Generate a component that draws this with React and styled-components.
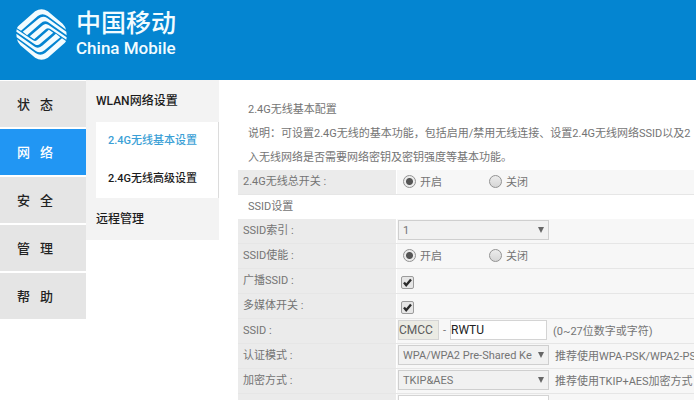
import React, { useState } from 'react';
import styled, { createGlobalStyle } from 'styled-components';

const GlobalStyle = createGlobalStyle`
  * {
    box-sizing: border-box;
  }

  body {
    margin: 0;
    background: #fff;
    color: #747474;
    font-family: Roboto, "Noto Sans CJK SC", sans-serif;
    font-size: 11px;
  }
`;

const Page = styled.div`
  height: 100vh;
  overflow: hidden;
`;

const Header = styled.header`
  display: flex;
  align-items: flex-start;
  gap: 9px;
  height: 80px;
  padding: 9px 16px;
  background: #0485d1;
  color: #f2fcff;
`;

const Logo = styled.svg`
  width: 51px;
  height: 51px;
  flex: none;
`;

const Brand = styled.div`
  display: flex;
  flex-direction: column;
`;

const BrandName = styled.span`
  font-size: 25px;
  font-weight: 500;
  line-height: 30px;
`;

const BrandLatin = styled.span`
  font-size: 17px;
  font-weight: 500;
  line-height: 18px;
`;

const Body = styled.div`
  display: flex;
  align-items: flex-start;
`;

const Nav = styled.nav`
  display: flex;
  flex-direction: column;
  flex: none;
  gap: 2px;
  width: 86px;
  padding-top: 1px;
`;

const NavLink = styled.a`
  display: flex;
  align-items: center;
  gap: 10px;
  height: 46px;
  padding: 0 0 2px 17px;
  background: ${({ $active }) => ($active ? '#2196f3' : '#e5e5e5')};
  color: ${({ $active }) => ($active ? '#fff' : '#222')};
  font-size: 13px;
  font-weight: 500;
  text-decoration: none;
`;

const SubNav = styled.nav`
  flex: none;
  width: 133px;
  background: #f3f3f3;
`;

const SubLink = styled.a`
  display: block;
  padding-left: 10px;
  color: #1c1c1c;
  font-size: 12px;
  font-weight: 500;
  line-height: 42px;
  text-decoration: none;
`;

const SubList = styled.div`
  margin: 0 1px 0 10px;
  background: #fff;
  box-shadow: 1px 0 0 #dcdcdc;
`;

const SubItem = styled.a`
  display: block;
  padding-left: 12px;
  color: ${({ $active }) => ($active ? '#3b9fd6' : '#1c1c1c')};
  font-size: 11px;
  font-weight: 500;
  line-height: 38px;
  text-decoration: none;
`;

const Content = styled.main`
  flex: 1;
  min-width: 0;
  margin: 0 2px 0 19px;
  padding-top: 18px;
  overflow: hidden;
  white-space: nowrap;
`;

const Intro = styled.div`
  padding-left: 10px;
  line-height: 24px;
`;

const IntroText = styled.p`
  margin: 0;
`;

const SectionTitle = styled.div`
  padding-left: 10px;
  line-height: 24px;
`;

const Row = styled.div`
  display: flex;
  height: 25px;
  border-bottom: 1px solid #e6e6e6;
`;

const RowLabel = styled.label`
  flex: none;
  width: 158px;
  padding-left: 5px;
  background: #ebebeb;
  line-height: 24px;
`;

const RowValue = styled.div`
  display: flex;
  flex: 1;
  align-items: center;
  min-width: 0;
  margin-left: 1px;
  padding: 0 0 2px 1px;
  background: #f7f7f7;
`;

const RadioLabel = styled.label`
  display: flex;
  align-items: center;
  gap: 4px;
  width: 86px;
  padding-left: 5px;
`;

const RadioInput = styled.input`
  appearance: none;
  width: 13px;
  height: 13px;
  margin: 0;
  border: 1px solid #929292;
  border-radius: 50%;
  background: ${({ checked }) =>
    checked ? 'radial-gradient(circle, #555 0 3px, #ececec 4px)' : 'linear-gradient(#ececec, #d6d6d6)'};
`;

const CheckInput = styled.input`
  appearance: none;
  width: 13px;
  height: 13px;
  margin: 0;
  border: 1px solid #9b9b9b;
  border-radius: 2px;
  background: #e6e6e6;
`;

const CheckBox = styled.span`
  display: grid;
  margin: 4px 0 0 3px;

  > * {
    grid-area: 1 / 1;
  }

  svg {
    width: 13px;
    height: 13px;
    pointer-events: none;
  }
`;

const SelectBox = styled.span`
  display: grid;
  flex: none;
  align-items: center;
  width: 151px;

  > * {
    grid-area: 1 / 1;
  }

  svg {
    justify-self: end;
    width: 6px;
    height: 6px;
    margin-right: 5px;
    pointer-events: none;
  }
`;

const SelectInput = styled.select`
  appearance: none;
  width: 100%;
  height: 20px;
  padding: 0 12px 0 4px;
  border: 1px solid #cfcfcf;
  border-radius: 0;
  background: #f1f1f1;
  color: #747474;
  font: inherit;
`;

const TextInput = styled.input`
  flex: none;
  width: ${({ $width }) => $width};
  height: 20px;
  padding: 0;
  border: 1px solid #d4d4d4;
  background: ${({ disabled }) => (disabled ? '#ebebe4' : '#fff')};
  color: ${({ disabled }) => (disabled ? '#5c5c5c' : '#222')};
  font: inherit;
  font-size: 12px;
`;

const Dash = styled.span`
  width: 11px;
  text-align: center;
`;

const Hint = styled.span`
  margin-left: 6px;
`;

const navItems = ['状态', '网络', '安全', '管理', '帮助'];

// One half of the mark, the other half is the same turned by 180 degrees
const logoStrips = [
  'M24 64L74 20Q93 8 112 20L156 57Q164 65 166 75L111 34Q96 24 82 34L32 78L20 70Q21 67 24 64Z',
  'M37 81L84 42Q97 31 110 40L167 81L168 91L112 52Q101 46 90 56L50 91Z',
  'M58 94L96 62Q104 54 113 60L168 97L167 105L118 72Q112 68 107 72L71 103Z',
];

function ChinaMobileLogo() {
  return (
    <Logo viewBox="17 13 152 152" aria-hidden="true" fill="#f2fcff">
      {logoStrips.map((d) => (
        <g key={d}>
          <path d={d} />
          <path d={d} transform="rotate(180 93 89)" />
        </g>
      ))}
    </Logo>
  );
}

function Radios({ name, label }) {
  const [value, setValue] = useState('on');

  return (
    <Row role="radiogroup" aria-label={label}>
      <RowLabel as="span">{label} :</RowLabel>
      <RowValue>
        <RadioLabel>
          <RadioInput type="radio" name={name} checked={value === 'on'} onChange={() => setValue('on')} />
          开启
        </RadioLabel>
        <RadioLabel>
          <RadioInput type="radio" name={name} checked={value === 'off'} onChange={() => setValue('off')} />
          关闭
        </RadioLabel>
      </RowValue>
    </Row>
  );
}

function Check({ id, label }) {
  const [checked, setChecked] = useState(true);

  return (
    <Row>
      <RowLabel htmlFor={id}>{label} :</RowLabel>
      <RowValue>
        <CheckBox>
          <CheckInput id={id} type="checkbox" checked={checked} onChange={() => setChecked(!checked)} />
          {checked && (
            <svg viewBox="0 0 13 13" aria-hidden="true">
              <path d="M3 6.5L5.2 9.2L10 3.5" fill="none" stroke="#2b2b2b" strokeWidth="2.4" />
            </svg>
          )}
        </CheckBox>
      </RowValue>
    </Row>
  );
}

function Select({ id, label, option, hint }) {
  return (
    <Row>
      <RowLabel htmlFor={id}>{label} :</RowLabel>
      <RowValue>
        <SelectBox>
          <SelectInput id={id}>
            <option>{option}</option>
          </SelectInput>
          <svg viewBox="0 0 6 6" aria-hidden="true">
            <path d="M0 0H6L3 6Z" fill="#666" />
          </svg>
        </SelectBox>
        {hint && <Hint>{hint}</Hint>}
      </RowValue>
    </Row>
  );
}

export default function App() {
  return (
    <Page>
      <GlobalStyle />
      <Header>
        <ChinaMobileLogo />
        <Brand>
          <BrandName>中国移动</BrandName>
          <BrandLatin>China Mobile</BrandLatin>
        </Brand>
      </Header>
      <Body>
        <Nav>
          {navItems.map((item) => (
            <NavLink key={item} href="#" $active={item === '网络'}>
              <span>{item[0]}</span>
              <span>{item[1]}</span>
            </NavLink>
          ))}
        </Nav>
        <SubNav>
          <SubLink href="#">WLAN网络设置</SubLink>
          <SubList>
            <SubItem href="#" $active>2.4G无线基本设置</SubItem>
            <SubItem href="#">2.4G无线高级设置</SubItem>
          </SubList>
          <SubLink href="#">远程管理</SubLink>
        </SubNav>
        <Content>
          <Intro>
            <IntroText>2.4G无线基本配置</IntroText>
            <IntroText>
              说明：可设置2.4G无线的基本功能，包括启用/禁用无线连接、设置2.4G无线网络SSID以及2
              <br />
              入无线网络是否需要网络密钥及密钥强度等基本功能。
            </IntroText>
          </Intro>
          <Radios name="wireless" label="2.4G无线总开关" />
          <SectionTitle>SSID设置</SectionTitle>
          <Select id="ssid-index" label="SSID索引" option="1" />
          <Radios name="ssid-enable" label="SSID使能" />
          <Check id="broadcast" label="广播SSID" />
          <Check id="wmm" label="多媒体开关" />
          <Row>
            <RowLabel htmlFor="ssid">SSID :</RowLabel>
            <RowValue>
              <TextInput $width="41px" aria-label="SSID" defaultValue="CMCC" disabled />
              <Dash>-</Dash>
              <TextInput $width="97px" id="ssid" defaultValue="RWTU" />
              <Hint>(0~27位数字或字符)</Hint>
            </RowValue>
          </Row>
          <Select
            id="auth"
            label="认证模式"
            option="WPA/WPA2 Pre-Shared Ke"
            hint="推荐使用WPA-PSK/WPA2-PS"
          />
          <Select id="cipher" label="加密方式" option="TKIP&AES" hint="推荐使用TKIP+AES加密方式" />
          <Row>
            <RowLabel as="span" />
            <RowValue>
              <TextInput $width="151px" aria-label="WPA" />
            </RowValue>
          </Row>
        </Content>
      </Body>
    </Page>
  );
}
